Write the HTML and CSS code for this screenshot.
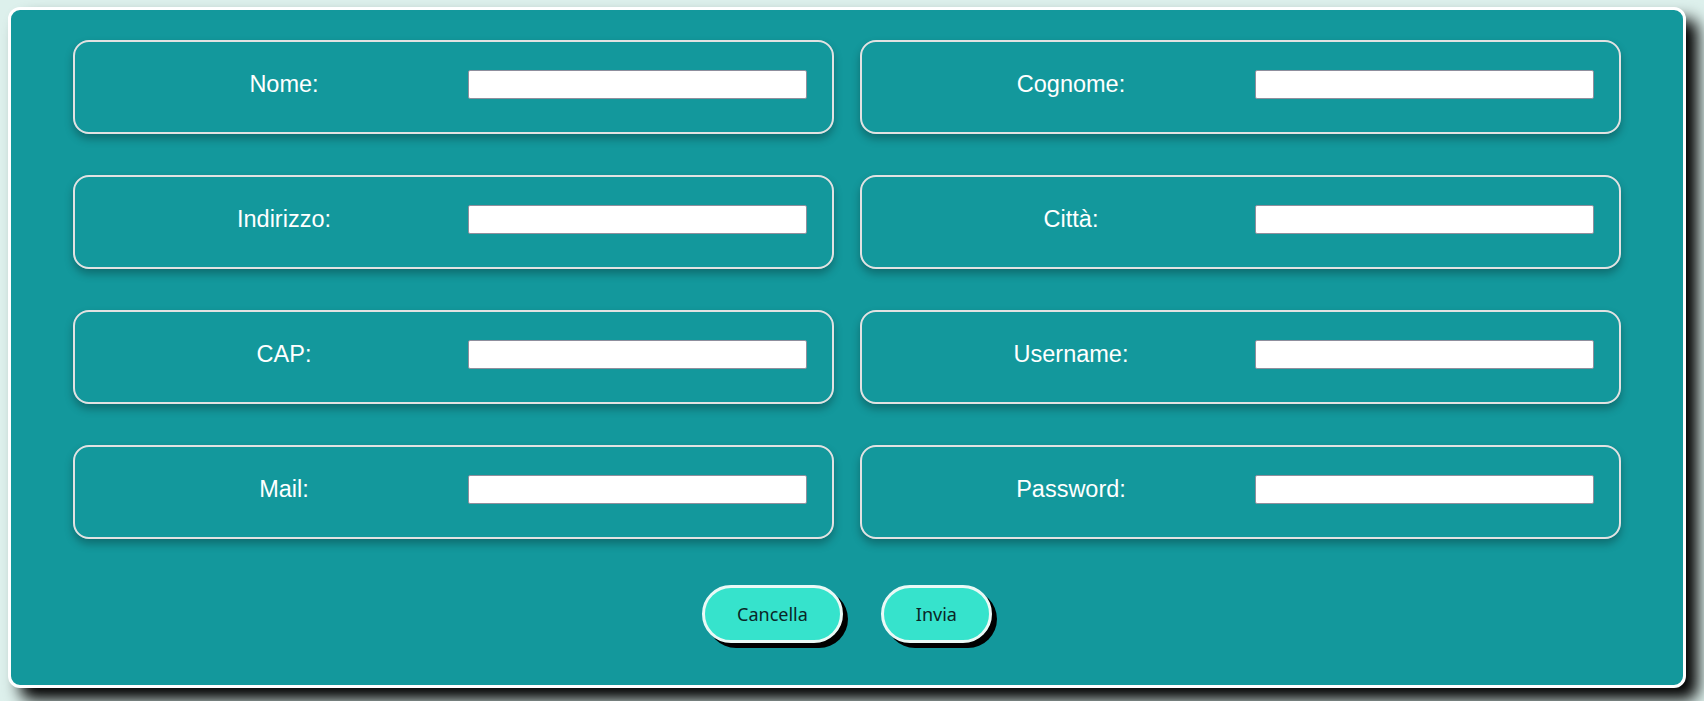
FILE: index.html
```
<!DOCTYPE html>
<html lang="it">
<head>
<meta charset="utf-8">
<title>Registrazione</title>
<link rel="stylesheet" href="styles.css">
</head>
<body>
<form class="panel">
  <div class="grid">
    <div class="field"><label class="label">Nome:</label><input class="input" type="text"></div>
    <div class="field"><label class="label">Cognome:</label><input class="input" type="text"></div>
    <div class="field"><label class="label">Indirizzo:</label><input class="input" type="text"></div>
    <div class="field"><label class="label">Città:</label><input class="input" type="text"></div>
    <div class="field"><label class="label">CAP:</label><input class="input" type="text"></div>
    <div class="field"><label class="label">Username:</label><input class="input" type="text"></div>
    <div class="field"><label class="label">Mail:</label><input class="input" type="text"></div>
    <div class="field"><label class="label">Password:</label><input class="input" type="password"></div>
  </div>
  <div class="actions">
    <button class="btn" type="reset">Cancella</button>
    <button class="btn" type="submit">Invia</button>
  </div>
</form>
</body>
</html>
```
FILE: styles.css
```
html, body {
  margin: 0;
  padding: 0;
}
body {
  background: #ddf0ec;
  width: 1704px;
  height: 701px;
  overflow: hidden;
  padding-top: 7px;
  padding-left: 8px;
  box-sizing: border-box;
}
.panel {
  box-sizing: border-box;
  width: 1678px;
  height: 681px;
  background: #13989c;
  border: 3px solid #ffffff;
  border-radius: 12px;
  box-shadow: 12px 12px 16px #000;
  padding: 30px 62px 0 62px;
  margin: 0;
}
.grid {
  display: grid;
  grid-template-columns: 761px 761px;
  column-gap: 26px;
  row-gap: 41px;
}
.field {
  box-sizing: border-box;
  height: 94px;
  border: 2px solid #e2e2e2;
  border-radius: 16px;
  box-shadow: 0 5px 8px rgba(0, 0, 0, 0.28);
  display: flex;
  align-items: center;
  padding: 0 25px 5px 25px;
}
.label {
  flex: 1;
  text-align: center;
  color: #ffffff;
  font-family: "Liberation Sans", Arial, sans-serif;
  font-size: 23.5px;
}
.input {
  box-sizing: border-box;
  width: 339px;
  height: 29px;
  border: 1px solid #8f8f9d;
  border-radius: 2px;
  background: #ffffff;
  margin: 0;
  padding: 0 4px;
}
.actions {
  display: flex;
  justify-content: center;
  gap: 38px;
  margin-top: 46px;
}
.btn {
  box-sizing: border-box;
  height: 58px;
  padding: 0 32px;
  border: 3px solid #eaf9f6;
  border-radius: 29px;
  background: #36e3cc;
  color: #0a2626;
  font-family: "Noto Sans", "Open Sans", sans-serif;
  font-size: 18px;
  box-shadow: 5px 5px 0 #000;
  cursor: pointer;
}
```
